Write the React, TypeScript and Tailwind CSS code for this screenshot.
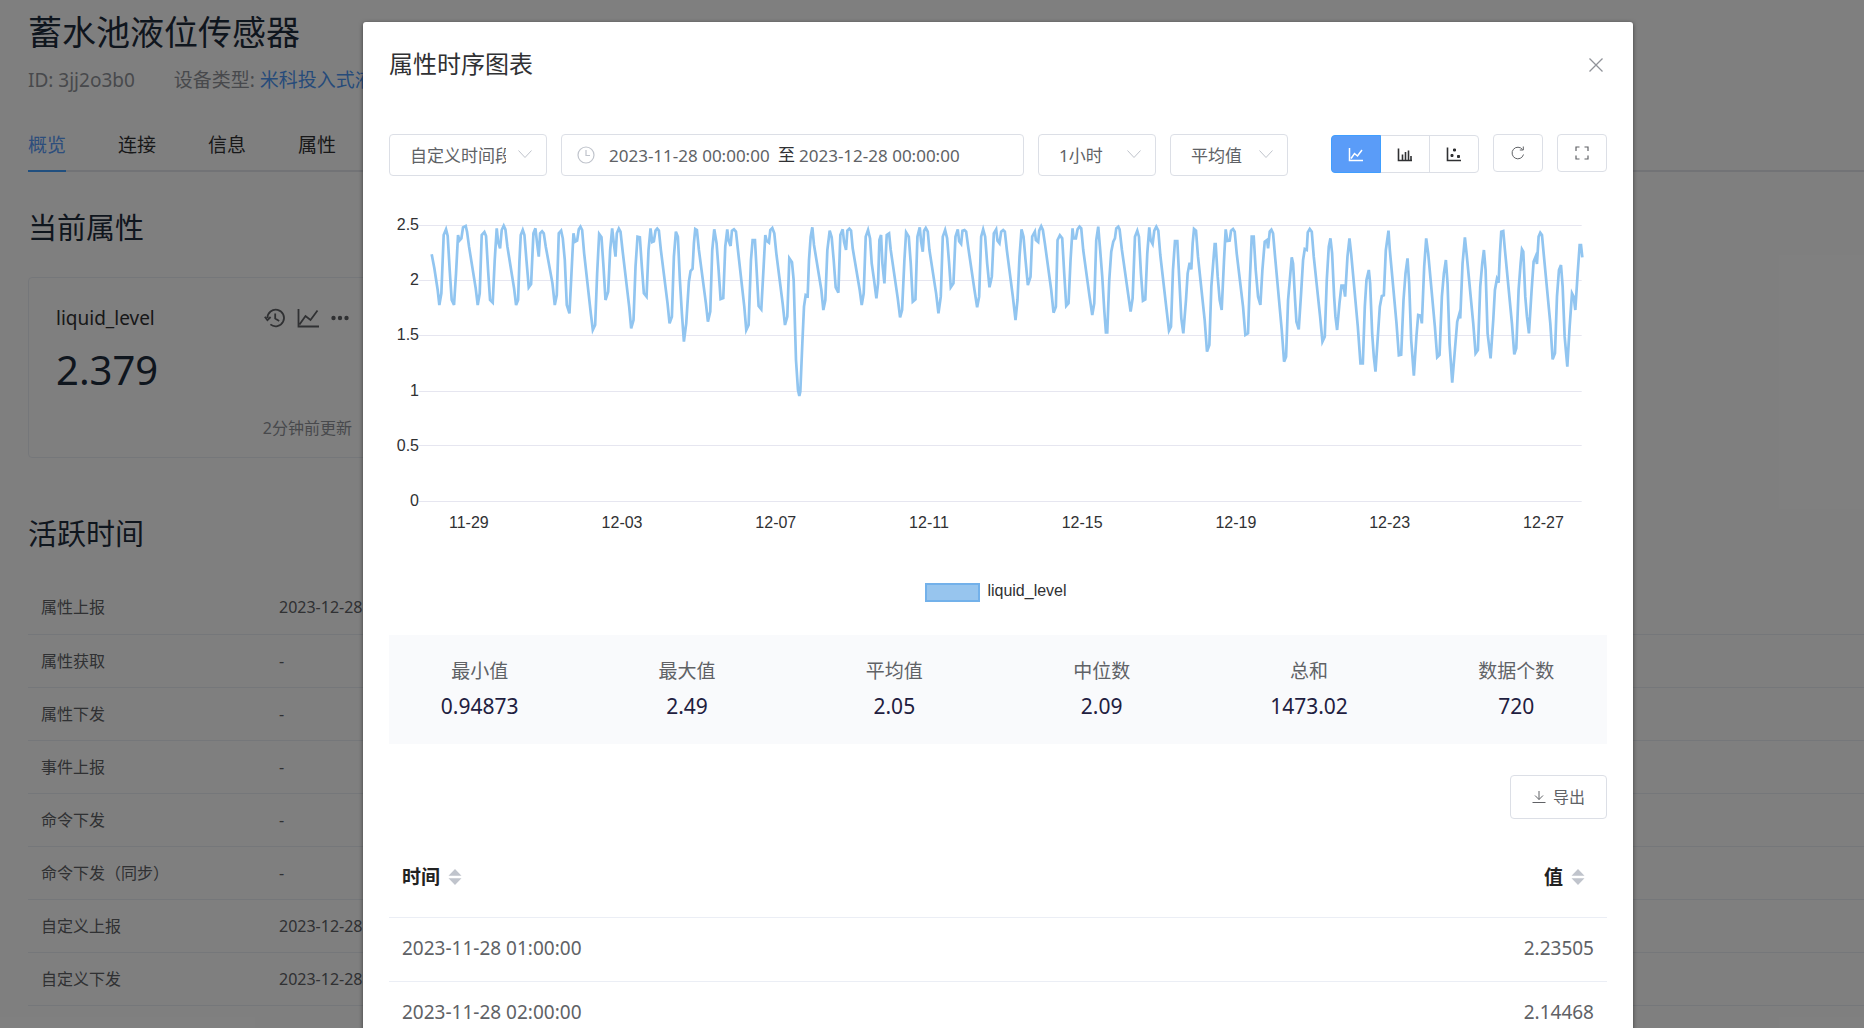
import type { ReactNode } from "react";

const tabs = ["概览", "连接", "信息", "属性"];

const activity = [
  ["属性上报", "2023-12-28 12:30:05"],
  ["属性获取", "-"],
  ["属性下发", "-"],
  ["事件上报", "-"],
  ["命令下发", "-"],
  ["命令下发（同步）", "-"],
  ["自定义上报", "2023-12-28 12:30:05"],
  ["自定义下发", "2023-12-28 12:30:05"],
];

const stats = [
  ["最小值", "0.94873"],
  ["最大值", "2.49"],
  ["平均值", "2.05"],
  ["中位数", "2.09"],
  ["总和", "1473.02"],
  ["数据个数", "720"],
];

const rows = [
  ["2023-11-28 01:00:00", "2.23505"],
  ["2023-11-28 02:00:00", "2.14468"],
];

const yTicks = ["2.5", "2", "1.5", "1", "0.5", "0"];
const xTicks = ["11-29", "12-03", "12-07", "12-11", "12-15", "12-19", "12-23", "12-27"];

// Chart units: three per pixel, y grows downwards, 2.5 sits at 76 and 0 at 903
const series = [
  // 11-28 to 12-07
  "158,163 166,205 176,270 181,315 187,280 191,180 194,105 201,88 206,108 212,210 218,300 225,315 231,220 237,105 241,122 247,115 252,82 260,78 264,95 270,140",
  "290,265 296,315 302,280 308,105 316,96 321,108 327,210 333,300 341,308 347,180 353,85 357,125 363,145 368,90 374,77 379,88 385,140 405,265 411,315 417,300",
  "421,185 425,105 431,90 436,105 442,180 449,262 456,252 463,100 469,85 474,130 479,170 483,100 489,94 494,100 500,140 520,250 527,315 533,285 539,100 546,92",
  "551,115 557,180 563,315 571,340 577,220 583,100 588,125 594,122 599,88 604,80 609,90 615,160 635,340 641,390 648,375 654,220 660,102 667,112 673,200 679,300",
  "687,275 693,150 699,85 704,130 709,170 713,100 719,86 724,95 730,150 750,320 756,385 763,360 769,200 775,110 782,112 788,200 794,280 802,290 808,150 814,85",
  "819,126 824,124 829,92 834,86 839,92 845,150 865,310 871,370 878,350 884,170 890,95 896,110 902,240 908,340 914,425 921,370 929,245 934,213 940,206 944,130",
  "948,87 953,90 959,150 980,310 986,365 993,335 999,150 1005,88 1012,130 1018,210 1024,297 1032,294 1038,140 1044,88 1048,122 1054,138 1058,92 1064,88 1070,95",
  "1076,150 1095,320 1101,390 1108,375 1115,180 1120,120 1127,120 1132,210 1138,318 1146,328 1153,200 1158,105 1162,122 1169,128 1173,90 1179,84 1185,100 1191,160 1210,310",
  // 12-07 to 12-17
  "1217,375 1224,350 1230,175 1238,187 1243,240 1250,480 1256,570 1260,588 1263,575 1269,430 1274,320 1279,285 1285,288 1289,180 1294,110 1299,82 1304,135 1326,270 1332,330",
  "1338,300 1344,150 1351,92 1357,112 1363,180 1369,262 1377,278 1383,105 1390,88 1394,125 1400,150 1404,92 1410,86 1415,92 1420,145 1441,270 1447,315 1453,280 1459,110",
  "1466,90 1472,115 1477,190 1484,240 1491,295 1496,250 1500,120 1505,105 1509,190 1515,250 1522,105 1529,100 1534,150 1555,295 1562,352 1568,330 1575,180 1580,97 1588,110",
  "1594,190 1600,305 1608,298 1614,110 1621,82 1625,125 1630,155 1634,92 1639,84 1645,95 1650,150 1670,280 1677,340 1684,290 1690,110 1697,90 1703,115 1709,190 1714,262",
  "1722,250 1728,110 1735,88 1739,124 1745,132 1749,92 1755,90 1760,95 1766,140 1785,270 1793,322 1799,290 1805,110 1811,88 1817,110 1823,190 1830,262 1837,230 1843,100",
  "1850,88 1854,122 1860,130 1865,95 1871,90 1876,95 1882,150 1900,290 1908,360 1914,300 1920,170 1926,88 1932,110 1938,180 1945,255 1953,230 1958,110 1966,95 1969,120",
  "1976,126 1979,92 1985,79 1990,90 1996,130 2015,270 2022,338 2029,320 2034,120 2041,106 2048,115 2054,220 2060,318 2067,310 2073,180 2079,85 2082,115 2089,115 2094,88",
  "2100,80 2105,85 2111,150 2130,290 2138,345 2144,310 2150,120 2156,80 2161,140 2168,230 2174,330 2179,397 2183,397 2189,240 2195,155 2201,125 2206,115 2210,85 2216,80",
  "2220,88 2227,150 2246,285 2253,335 2259,295 2266,110 2273,92 2278,110 2284,220 2290,302 2297,298 2303,160 2309,82 2313,120 2319,132 2324,92 2330,80 2336,92 2342,165",
  "2362,340 2368,392 2374,380 2380,210 2386,123 2393,123 2399,240",
  // 12-17 to 12-28
  "2405,355 2411,400 2419,300 2424,220 2430,188 2435,208 2439,130 2443,87 2449,92 2455,170 2475,360 2482,455 2489,435 2495,260 2505,132 2508,132 2514,230 2520,300 2526,330",
  "2533,180 2538,88 2543,123 2550,122 2554,92 2560,87 2565,95 2571,160 2590,320 2597,405 2605,400 2610,250 2616,110 2622,110 2628,210 2635,290 2642,315 2648,210 2655,125",
  "2662,120 2665,145 2670,95 2675,89 2680,100 2686,170 2706,390 2713,485 2719,470 2725,300 2736,172 2740,190 2746,300 2750,365 2757,388 2764,280 2770,180 2775,147 2781,150",
  "2784,97 2790,87 2796,95 2802,170 2821,350 2828,425 2835,410 2841,240 2847,140 2852,115 2857,160 2863,290 2867,350 2872,390 2879,310 2885,257 2891,257 2896,290 2903,170",
  "2909,115 2914,160 2934,380 2942,490 2949,490 2955,320 2960,240 2967,210 2971,250 2977,400 2982,470 2987,515 2994,410 3000,320 3006,288 3012,286 3018,150 3026,92 3030,150",
  "3050,370 3057,466 3064,464 3071,300 3077,220 3083,175 3088,250 3094,420 3102,527 3110,405 3115,345 3122,347 3126,370 3133,200 3139,115 3145,160 3165,380 3172,472 3179,465",
  "3186,290 3192,220 3198,180 3203,250 3209,430 3217,548 3225,450 3232,365 3238,343 3241,355 3248,190 3255,112 3260,160 3280,370 3287,460 3294,450 3301,260 3307,190 3312,150",
  "3317,210 3323,400 3332,475 3340,360 3345,270 3351,237 3356,248 3360,160 3364,95 3370,93 3375,150 3396,370 3403,463 3409,445 3416,270 3422,190 3426,148 3430,155 3436,290",
  "3441,350 3447,400 3455,270 3461,185 3467,170 3471,192 3476,110 3481,98 3486,105 3492,170 3511,370 3518,478 3525,460 3531,290 3537,210 3543,195 3548,260 3554,410 3562,500",
  "3569,380 3576,280 3581,290 3586,330 3593,220 3599,135 3603,135 3607,172",
].join(" ");

function ChevronDown() {
  return (
    <svg
      viewBox="0 0 16 16"
      className="pointer-events-none absolute top-3 right-3.5 size-4 fill-none stroke-[#c0c4cc]"
    >
      <path d="M1.5 4.5 8 11.5l6.5-7" />
    </svg>
  );
}

function Select({ label, value, className }: { label: string; value: string; className: string }) {
  return (
    <div className={`relative ${className}`}>
      <select
        aria-label={label}
        className="h-[42px] w-full appearance-none rounded border border-[#dcdfe6] bg-white pt-0.5 pr-10 pl-5 text-[17px] text-[#606266]"
      >
        <option>{value}</option>
      </select>
      <ChevronDown />
    </div>
  );
}

function ChartIcon({ children }: { children: ReactNode }) {
  return (
    <svg viewBox="0 0 16 16" className="size-4 fill-none stroke-current">
      {children}
    </svg>
  );
}

function SortIcon() {
  return (
    <svg viewBox="0 0 14 16" className="h-4 w-3.5 fill-[#c0c4cc]">
      <path d="M7 0l6.5 6.8H.5zM7 16l6.5-6.800H.5z" />
    </svg>
  );
}

function DevicePage() {
  return (
    <main className="pt-1 pl-7">
      <h1 className="text-[34px] leading-14 text-[#1f2d3d]">蓄水池液位传感器</h1>
      <p className="mt-1 flex gap-[39px] text-[19px] leading-8 whitespace-nowrap text-[#909399]">
        <span>ID: 3jj2o3b0</span>
        <span>
          设备类型:{" "}
          <a href="#type" className="text-[#4e97f5]">
            米科投入式液位计
          </a>
        </span>
      </p>

      <nav className="mt-6 flex gap-[52px] border-b-2 border-[#e4e7ed] text-[19px] leading-[50px] text-[#303133]">
        {tabs.map((tab, i) => (
          <a
            key={tab}
            href="#tab"
            className={i === 0 ? "-mb-0.5 border-b-2 border-[#409eff] text-[#5a9cf8]" : ""}
          >
            {tab}
          </a>
        ))}
      </nav>

      <h2 className="mt-9 text-[29px] leading-10 text-[#1f2d3d]">当前属性</h2>
      <section className="mt-[29px] h-[181px] w-[352px] rounded border border-[#ebeef5] px-[27px] pt-6">
        <div className="flex items-center justify-between">
          <h3 className="text-[19px] leading-8 text-[#303133]">liquid_level</h3>
          <div className="flex items-center gap-[11px] pr-0.5 text-[#606266]">
            <button type="button" aria-label="历史">
              <svg viewBox="0 0 22 22" className="size-[22px] fill-none stroke-current stroke-[1.8]">
                <path d="M3.4 11a8.3 8.3 0 1 1 3 6.4M.8 9.8l2.6 3.4 3.2-3.2M11.2 6.5v5l4 2.4" />
              </svg>
            </button>
            <button type="button" aria-label="图表">
              <svg viewBox="0 0 22 22" className="size-[22px] fill-none stroke-current stroke-[1.8]">
                <path d="M1.5 2v17.500H22M2.500 17.500 8.500 9l5 4 7-9.500" />
              </svg>
            </button>
            <button type="button" aria-label="更多">
              <svg viewBox="0 0 20 22" className="h-[22px] w-5 fill-current">
                <circle cx="3.500" cy="11" r="2.200" />
                <circle cx="10" cy="11" r="2.200" />
                <circle cx="16.500" cy="11" r="2.200" />
              </svg>
            </button>
          </div>
        </div>
        <p className="text-[40px] leading-[72px] text-[#1f2d3d]">2.379</p>
        <p className="mt-1.5 text-right text-[16px] leading-8 text-[#909399]">2分钟前更新</p>
      </section>

      <h2 className="mt-14 text-[29px] leading-10 text-[#1f2d3d]">活跃时间</h2>
      <table className="mt-[27px] w-full text-left text-[16px] text-[#606266]">
        <tbody>
          {activity.map(([name, time]) => (
            <tr key={name} className="h-[53px] border-b border-[#ebeef5]">
              <th scope="row" className="w-[238px] pl-[13px] font-normal">
                {name}
              </th>
              <td className="pl-[13px]">{time}</td>
            </tr>
          ))}
        </tbody>
      </table>
    </main>
  );
}

function Toolbar() {
  return (
    <div className="flex items-start justify-between">
      <div className="flex gap-3.5">
        <Select label="时间范围" value="自定义时间段" className="w-[158px]" />
        <div className="flex h-[42px] w-[463px] items-center rounded border border-[#dcdfe6] pl-[15px] text-[17px] text-[#606266]">
          <svg viewBox="0 0 18 18" className="mr-3.5 size-[18px] fill-none stroke-[#c0c4cc] stroke-[1.2]">
            <circle cx="9" cy="9" r="8" />
            <path d="M9 4v5.500h4" />
          </svg>
          <input
            aria-label="开始时间"
            defaultValue="2023-11-28 00:00:00"
            className="w-[169px] pt-0.5"
          />
          <span className="mr-1 text-[#303133]">至</span>
          <input
            aria-label="结束时间"
            defaultValue="2023-12-28 00:00:00"
            className="w-[169px] pt-0.5"
          />
        </div>
        <Select label="间隔" value="1小时" className="w-[118px]" />
        <Select label="聚合" value="平均值" className="w-[118px]" />
      </div>

      <div className="flex gap-3.5">
        <div className="mt-px flex h-[38px] divide-x divide-[#dcdfe6] rounded border border-[#dcdfe6] text-[#303133]">
          <button
            type="button"
            aria-label="折线图"
            className="-my-px -ml-px flex w-[50px] items-center justify-center rounded-l border border-[#409eff] bg-[#5a9cf8] text-white"
          >
            <ChartIcon>
              <path d="M1.500 2v12.500H15M3 12.500l3.500-5 3 2.500L14 4" strokeWidth="1.500" />
            </ChartIcon>
          </button>
          <button type="button" aria-label="柱状图" className="flex w-[49px] items-center justify-center">
            <ChartIcon>
              <path d="M1.500 2.500v12H15M5.500 14V8.500M8.500 14V6M11.500 14V4.500M14 14v-4" strokeWidth="1.600" />
            </ChartIcon>
          </button>
          <button type="button" aria-label="散点图" className="flex w-12 items-center justify-center">
            <ChartIcon>
              <path d="M1.500 1.500v13H15" strokeWidth="1.600" />
              <path d="M5 8.500h2v2H5zM7.500 3h2v2h-2zM11.500 9.500h2v2h-2z" className="fill-current" />
            </ChartIcon>
          </button>
        </div>
        <button
          type="button"
          aria-label="刷新"
          className="flex h-[38px] w-[50px] items-center justify-center rounded border border-[#dcdfe6] text-[#606266]"
        >
          <ChartIcon>
            <path d="M13.500 9.500A5.800 5.800 0 1 1 12.500 4.500M13.300 1.500v3.500h-3.500" />
          </ChartIcon>
        </button>
        <button
          type="button"
          aria-label="全屏"
          className="flex h-[38px] w-[50px] items-center justify-center rounded border border-[#dcdfe6] text-[#606266]"
        >
          <ChartIcon>
            <path d="M2 6V2h3.500M10.500 2H14v4M14 10.500V14h-3.500M5.500 14H2v-3.500" strokeWidth="1.200" />
          </ChartIcon>
        </button>
      </div>
    </div>
  );
}

function Chart() {
  return (
    <figure className="mt-[39px] font-['Liberation_Sans'] text-[16px] leading-5 text-[#303133]">
      <div className="flex">
        <div className="flex h-[296px] w-[30px] flex-col justify-between text-right">
          {yTicks.map((tick) => (
            <span key={tick}>{tick}</span>
          ))}
        </div>
        <svg
          viewBox="120 45 3492 888"
          preserveAspectRatio="none"
          className="mr-[23px] h-[296px] min-w-0 flex-1 fill-none"
        >
          <path
            d="M120 76.500H3605M120 241.500H3605M120 406.500H3605M120 574.500H3605M120 736.500H3605M120 904.500H3605"
            stroke="#e6e6f0"
            vectorEffect="non-scaling-stroke"
          />
          <polyline points={series} stroke="#91c5f0" strokeWidth="2.700" vectorEffect="non-scaling-stroke" />
        </svg>
      </div>
      <div className="mt-0.5 flex justify-between pr-[43px] pl-[60px]">
        {xTicks.map((tick) => (
          <span key={tick}>{tick}</span>
        ))}
      </div>
      <figcaption className="mt-[46px] flex items-center justify-center gap-[7px] pr-1">
        <span className="mt-1 h-[19px] w-[55px] border-2 border-[#73b1ea] bg-[#97c5ee]" />
        liquid_level
      </figcaption>
    </figure>
  );
}

function ChartDialog() {
  return (
    <div role="dialog" aria-label="属性时序图表" className="w-full rounded-[3px] bg-white px-[26px] pt-6 shadow-[0_1px_4px_rgba(0,0,0,0.5)]">
      <header className="flex items-center justify-between pr-[3px]">
        <h2 className="text-[24px] leading-9 text-[#303133]">属性时序图表</h2>
        <button type="button" aria-label="关闭" className="pt-0.5">
          <svg viewBox="0 0 16 16" className="size-4 fill-none stroke-[#909399] stroke-[1.3]">
            <path d="M1.500 1.500l13 13M14.500 1.500l-13 13" />
          </svg>
        </button>
      </header>

      <div className="mt-[52px]">
        <Toolbar />
      </div>
      <Chart />

      <section className="mt-[33px] bg-[#f9fafc] pt-[22px] pb-[21px]">
        <dl className="-mx-[13px] grid grid-cols-6 text-center">
          {stats.map(([name, value]) => (
            <div key={name}>
              <dt className="text-[19px] leading-7 text-[#606266]">{name}</dt>
              <dd className="mt-[5px] text-[21px] leading-[33px] text-[#1f2040]">{value}</dd>
            </div>
          ))}
        </dl>
      </section>

      <div className="mt-[31px] flex justify-end">
        <button
          type="button"
          className="flex h-11 w-[97px] items-center justify-center gap-[7px] rounded border border-[#dcdfe6] text-[16px] text-[#606266]"
        >
          <svg viewBox="0 0 14 14" className="size-3.5 fill-none stroke-current">
            <path d="M.5 12.500h13M7 1v8.500M3 5.500l4 4 4-4" />
          </svg>
          导出
        </button>
      </div>

      <table className="mt-[19px] w-full text-[19px] text-[#606266]">
        <thead>
          <tr className="h-[79px] border-b border-[#ebeef5] text-[#222]">
            <th scope="col" className="pl-[13px]">
              <button type="button" className="flex items-center gap-2">
                时间 <SortIcon />
              </button>
            </th>
            <th scope="col" className="pr-[22px]">
              <button type="button" className="ml-auto flex items-center gap-2">
                值 <SortIcon />
              </button>
            </th>
          </tr>
        </thead>
        <tbody>
          {rows.map(([time, value]) => (
            <tr key={time} className="h-16 border-b border-[#ebeef5]">
              <td className="pb-0.5 pl-[13px]">{time}</td>
              <td className="pr-[13px] pb-0.5 text-right">{value}</td>
            </tr>
          ))}
        </tbody>
      </table>
    </div>
  );
}

export default function App() {
  return (
    <div className="relative h-screen overflow-hidden bg-white font-['Noto_Sans','Noto_Sans_CJK_SC',sans-serif]">
      <DevicePage />
      {/* Modal layer */}
      <div className="absolute inset-0 flex items-start overflow-hidden bg-black/50 pt-[22px] pr-[231px] pl-[363px]">
        <ChartDialog />
      </div>
    </div>
  );
}
